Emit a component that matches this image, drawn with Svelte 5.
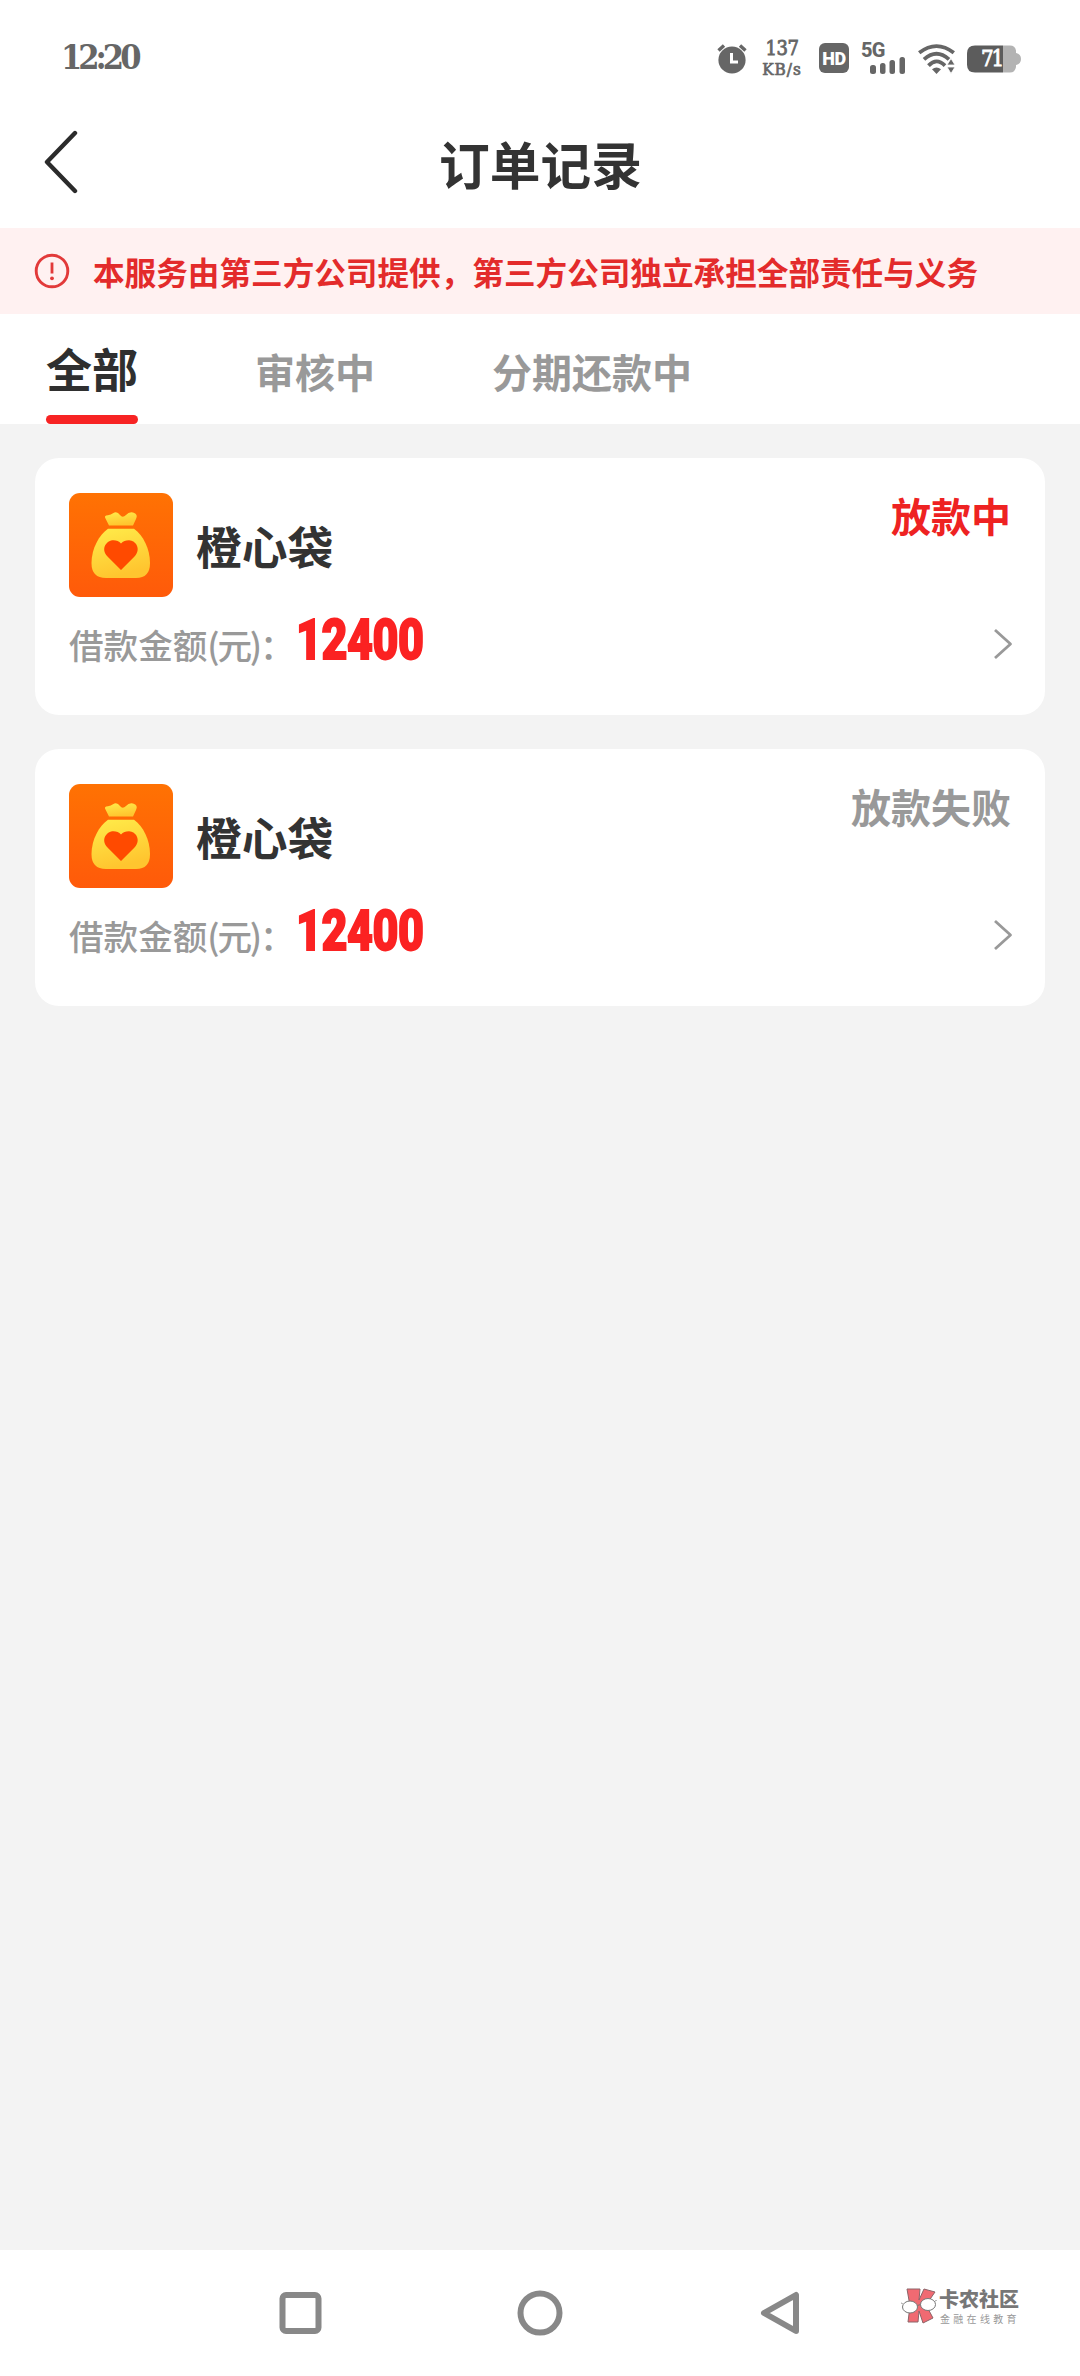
<script lang="ts">
  const notice = '本服务由第三方公司提供，第三方公司独立承担全部责任与义务';

  const tabs = [
    { id: 'all', label: '全部' },
    { id: 'review', label: '审核中' },
    { id: 'repay', label: '分期还款中' }
  ];

  const orders = [
    { name: '橙心袋', amount: 12400, status: '放款中', active: true },
    { name: '橙心袋', amount: 12400, status: '放款失败', active: false }
  ];

  let current = $state('all');
</script>

<div class="screen">
  <div class="statusbar">
    <span class="time">12:20</span>
    <div class="indicators">
      <svg class="alarm" width="30" height="32" viewBox="0 0 30 32">
        <circle cx="15" cy="18" r="13.6" fill="#666" />
        <path d="M1.5 8.5 L7 3.5 M28.500 8.500 L23 3.500" stroke="#666" stroke-width="3.4" />
        <path d="M14.500 11 V20 H21" fill="none" stroke="#fff" stroke-width="3" />
      </svg>
      <div class="speed"><span class="rate">137</span><span class="unit">KB/s</span></div>
      <span class="hd">HD</span>
      <div class="cell">
        <span class="gen">5G</span>
        <svg width="36" height="17" viewBox="0 0 36 17" fill="#666">
          <rect x="0" y="8" width="6" height="9" rx="2.500" />
          <rect x="10" y="6" width="5.500" height="11" rx="2.500" />
          <rect x="19.500" y="3" width="5.500" height="14" rx="2.500" />
          <rect x="29.500" y="0" width="5.500" height="17" rx="2.500" />
        </svg>
      </div>
      <svg class="wifi" width="38" height="30" viewBox="0 0 38 30">
        <g fill="none" stroke="#666" stroke-width="3.800">
          <path d="M1.200 8.800 Q18.500 -4.600 35.800 8.800" />
          <path d="M6 15.300 Q18.500 4.200 31 15.300" />
          <path d="M10.500 21.600 Q18.500 13.200 27 21.600" />
        </g>
        <path d="M14 25.200 Q18.500 22 23 25.200 L18.500 30 Z" fill="#666" />
        <path d="M33 14.500 L37 21 H29 Z M29 23 H37 L33 29.500 Z" fill="#666" stroke="#fff" stroke-width="0.800" />
      </svg>
      <div class="battery">
        <svg width="54" height="28" viewBox="0 0 54 28">
          <path d="M36 0.500 H43 Q48 0.500 49 5.500 L49 8 Q54 9 54 14 Q54 19 49 20 V22 Q48 27.500 43 27.500 H36 Z" fill="#b3b3b3" />
          <path d="M36 0.500 H8 Q0 0.500 0 8.500 V19.500 Q0 27.500 8 27.500 H36 Z" fill="#5c5c5c" />
        </svg>
        <span class="level">71</span>
      </div>
    </div>
  </div>

  <header class="navbar">
    <button class="back" aria-label="返回">
      <svg width="34" height="64" viewBox="0 0 34 64">
        <path d="M31 3 L3 32 L31 61" fill="none" stroke="#2b2b2b" stroke-width="4.400" stroke-linecap="round" stroke-linejoin="round" />
      </svg>
    </button>
    <h1>订单记录</h1>
  </header>

  <div class="notice">
    <svg width="36" height="36" viewBox="0 0 36 36">
      <circle cx="18" cy="18" r="15.800" fill="none" stroke="#e23a3a" stroke-width="2.900" />
      <path d="M18 9.500 V20.500" stroke="#e23a3a" stroke-width="2.800" />
      <circle cx="18" cy="25.300" r="1.900" fill="#e23a3a" />
    </svg>
    <p>{notice}</p>
  </div>

  <nav class="tabs">
    {#each tabs as tab}
      <button class="tab" class:selected={current === tab.id} onclick={() => (current = tab.id)}>{tab.label}</button>
    {/each}
  </nav>

  <main class="orders">
    {#each orders as order}
      <article class="card">
        <div class="top">
          <svg class="logo" width="104" height="104" viewBox="0 0 104 104">
            <defs>
              <linearGradient id="tile" x1="0" y1="0" x2="0" y2="1">
                <stop offset="0" stop-color="#ff7203" />
                <stop offset="1" stop-color="#ff5a0a" />
              </linearGradient>
              <linearGradient id="gold" x1="0" y1="0" x2="0.300" y2="1">
                <stop offset="0" stop-color="#ffec4a" />
                <stop offset="1" stop-color="#ffc52f" />
              </linearGradient>
            </defs>
            <rect width="104" height="104" rx="11" fill="url(#tile)" />
            <path d="M40 32.500 L36.500 25.500 Q34.500 22.500 39 22.300 Q42 22 44 20.300 Q48 17.800 51 22 Q53.500 25.500 57 22 Q60 18.500 64 19.500 Q69.500 21 67 26 L64 32.500 Z" fill="url(#gold)" />
            <path d="M39 35.800 H65 C74 42 81 56 81 70 Q81 85 67 85 H37 Q22.500 85 22.500 70 C22.500 56 30 42 39 35.800 Z" fill="url(#gold)" />
            <path d="M52 77 L38.500 63.500 C31 55 38 47.200 44.500 47.200 Q49 47.200 52 50.500 Q55 47.200 60 47.200 C67 47.500 72.500 56 65.500 63.500 Z" fill="#ff4a00" />
          </svg>
          <h2>{order.name}</h2>
          <span class="status" class:active={order.active}>{order.status}</span>
        </div>
        <div class="bottom">
          <span class="label">借款金额<span class="yuan">(元)</span>：</span>
          <strong class="amount">{order.amount}</strong>
          <svg class="more" width="20" height="34" viewBox="0 0 20 34">
            <path d="M2 3 L17.500 17 L2 31" fill="none" stroke="#999" stroke-width="2.800" stroke-linejoin="round" />
          </svg>
        </div>
      </article>
    {/each}
  </main>

  <footer class="sysnav">
    <svg class="keys" width="522" height="48" viewBox="0 0 522 48" fill="none" stroke="#888" stroke-width="6" stroke-linejoin="round">
      <rect x="4.500" y="5" width="36" height="36" rx="3.500" />
      <circle cx="262" cy="23" r="19.500" />
      <path d="M486 23 L518 5 V41 Z" />
    </svg>
    <div class="brand">
      <svg width="36" height="38" viewBox="0 0 36 38">
        <path d="M6 2 H19 L18 13 L23 2 L34 5 L25 18 L32 31 L22 36 L18 24 L17 35 H7 L9 19 Z" fill="#f06a72" stroke="#8c6468" stroke-width="1" />
        <ellipse cx="9" cy="20" rx="7.500" ry="6" fill="#fff" stroke="#777" />
        <ellipse cx="27" cy="17.500" rx="7.500" ry="6" fill="#fff" stroke="#777" />
        <path d="M16.500 18.500 L19.500 17.500 M1.500 17 L0 15.500 M34 14.500 L35.500 13" stroke="#777" />
      </svg>
      <div class="words">
        <span class="big">卡农社区</span>
        <span class="small">金融在线教育</span>
      </div>
    </div>
  </footer>
</div>

<style>
  :global(body) { margin: 0; background: #f3f3f3; }

  .screen {
    display: flex;
    flex-direction: column;
    width: 1080px;
    height: 2376px;
    overflow: hidden;
    background: #f3f3f3;
    color: #333;
    font-family: "Noto Sans CJK SC", sans-serif;
  }
  button { padding: 0; border: 0; background: none; font: inherit; color: inherit; }
  h1, h2, p { margin: 0; }
  svg { display: block; flex: none; }

  /* phone status bar */
  .statusbar {
    display: flex;
    justify-content: space-between;
    align-items: flex-start;
    box-sizing: border-box;
    height: 100px;
    padding: 36px 59px 0 61px;
    background: #fff;
    color: #666;
    font-family: "DejaVu Serif Condensed", "DejaVu Serif", serif;
    font-stretch: condensed;
    font-weight: 700;
  }
  .time { margin-top: 1px; font-size: 34px; line-height: 40px; letter-spacing: -4px; }
  .indicators { display: flex; align-items: flex-start; }
  .alarm { margin: 6px 14px 0 0; }
  .speed { display: flex; flex-direction: column; align-items: center; width: 42px; margin-right: 16px; font-weight: 400; }
  .rate { font-size: 20px; line-height: 24px; letter-spacing: -0.500px; -webkit-text-stroke: 0.8px #666; }
  .unit { font-size: 17px; line-height: 18px; letter-spacing: 1px; -webkit-text-stroke: 0.7px #666; }
  .hd {
    width: 30px;
    height: 30px;
    margin: 7px 12px 0 0;
    border-radius: 6px;
    background: #666;
    color: #fff;
    font: 900 18px/31px Roboto, sans-serif;
    letter-spacing: -0.500px;
    text-align: center;
  }
  .cell { width: 44px; margin: 6px 13px 0 0; }
  .cell svg { margin: -1px 0 0 9px; }
  .gen { display: block; font: 800 20px/16px Roboto, sans-serif; letter-spacing: -0.7px; }
  .wifi { margin: 8px 11px 0 0; }
  .battery { position: relative; margin-top: 9px; }
  .level { position: absolute; left: 14px; top: 1px; color: #fff; font-size: 22px; line-height: 26px; letter-spacing: -2px; font-weight: 400; -webkit-text-stroke: 0.8px #fff; }

  .navbar {
    display: grid;
    grid-template-columns: 120px 1fr 120px;
    align-items: center;
    height: 128px;
    background: #fff;
  }
  .back { justify-self: start; margin: -4px 0 0 44px; }
  h1 { margin: -2px 0 0 1px; font-size: 50.700px; line-height: 70px; font-weight: 700; text-align: center; }

  .notice {
    display: flex;
    align-items: center;
    gap: 23px;
    height: 86px;
    padding-left: 34px;
    background: #fff1f1;
    color: #e32b2b;
  }
  .notice p { font-size: 31.620px; line-height: 46px; font-weight: 700; white-space: nowrap; }

  .tabs {
    display: flex;
    align-items: flex-end;
    gap: 117px;
    height: 110px;
    padding-left: 46px;
    background: #fff;
    color: #999;
  }
  .tab { padding-bottom: 23px; font-size: 40px; line-height: 60px; font-weight: 700; }
  .tab.selected {
    display: flex;
    flex-direction: column;
    justify-content: space-between;
    height: 110px;
    padding: 21px 0 0;
    font-size: 46px;
    line-height: 64px;
    color: #2f2f2f;
  }
  .tab.selected::after { content: ''; width: 92px; height: 9px; border-radius: 5px; background: #f72323; }

  .orders { flex: 1; display: flex; flex-direction: column; gap: 34px; padding: 34px 35px; }
  .card { box-sizing: border-box; height: 257px; padding: 35px 34px 0; border-radius: 24px; background: #fff; }
  .top { display: flex; align-items: center; }
  h2 { flex: 1; margin-left: 23px; font-size: 45.800px; line-height: 64px; font-weight: 700; }
  .status { align-self: flex-start; margin-top: -3px; font-size: 40px; line-height: 50px; font-weight: 700; color: #999; }
  .status.active { color: #ee2222; }
  .bottom { display: flex; align-items: center; height: 90px; }
  .label { width: 227px; padding-top: 3px; font-size: 34.600px; line-height: 50px; font-weight: 500; color: #999; white-space: nowrap; }
  .yuan { letter-spacing: -2.200px; }
  .amount {
    flex: 1;
    margin-top: -4px;
    font: 900 56px/60px Roboto, sans-serif;
    letter-spacing: -0.600px;
    color: #fb2222;
    -webkit-text-stroke: 1.800px #fb2222;
    transform: scaleX(0.8);
    transform-origin: left;
  }
  .more { margin: 4px -2px 0 0; }

  /* system keys and site mark */
  .sysnav { display: flex; height: 126px; background: #fff; }
  .keys { margin: 40px 0 0 278px; }
  .brand { display: flex; gap: 2px; margin: 37px 0 0 101px; }
  .words { display: flex; flex-direction: column; color: #777; white-space: nowrap; }
  .big { font-size: 20px; line-height: 24px; font-weight: 900; }
  .small { font-size: 10px; line-height: 14px; letter-spacing: 3.300px; margin: 1px 0 0 1px; color: #999; }
</style>
